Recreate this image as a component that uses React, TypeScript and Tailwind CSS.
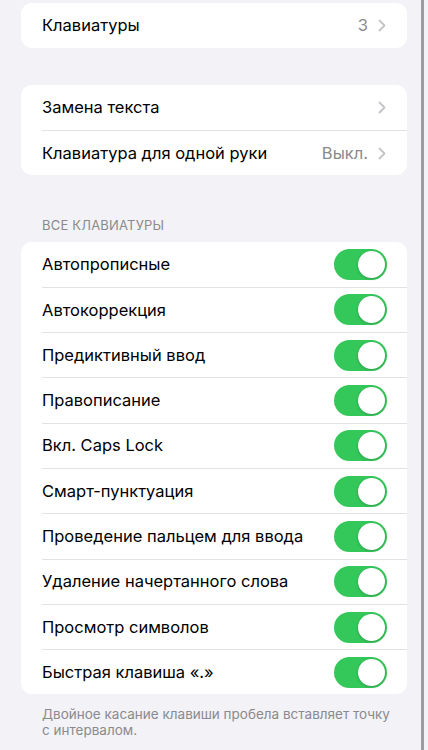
import React from 'react';

const font = { fontFamily: 'Inter, "Noto Sans", sans-serif' };

const Chevron = () => (
    <svg width="8" height="13" viewBox="0 0 8 13" fill="none" className="ml-[10px]">
        <path d="M1.5 1.5L6.5 6.5L1.5 11.5" stroke="#c4c4c8" strokeWidth="1.8" strokeLinecap="round" strokeLinejoin="round" />
    </svg>
);

const Toggle = () => (
    <div className="w-[53px] h-[31px] rounded-full bg-[#34c759] flex items-center justify-end pr-[2px]">
        <div className="w-[27px] h-[27px] rounded-full bg-white shadow-[0_1px_3px_rgba(0,0,0,0.2)]" />
    </div>
);

const LinkRow = ({ label, value, first }: { label: string; value?: string; first?: boolean }) => (
    <div className="flex items-center h-[45px] pl-[21px]">
        <div className={`flex items-center h-full flex-1 pr-[21px] ${first ? '' : 'border-t border-[#e2e2e6]'}`}>
            <span className="flex-1 text-[16.5px] text-black">{label}</span>
            {value && <span className="text-[16.5px] text-[#8a8a8e]">{value}</span>}
            <Chevron />
        </div>
    </div>
);

const ToggleRow = ({ label, first }: { label: string; first?: boolean }) => (
    <div className="flex items-center h-[45.3px] pl-[21px]">
        <div className={`flex items-center h-full flex-1 pr-[20px] ${first ? '' : 'border-t border-[#e2e2e6]'}`}>
            <span className="flex-1 text-[16.5px] text-black">{label}</span>
            <Toggle />
        </div>
    </div>
);

const toggles = [
    'Автопрописные',
    'Автокоррекция',
    'Предиктивный ввод',
    'Правописание',
    'Вкл. Caps Lock',
    'Смарт-пунктуация',
    'Проведение пальцем для ввода',
    'Удаление начертанного слова',
    'Просмотр символов',
    'Быстрая клавиша «.»',
];

const App = () => {
    return (
        <div className="flex w-[428px] h-[750px] overflow-hidden bg-[#f2f2f7]" style={font}>
            <div className="flex-1 pl-[21px] pr-[14px] pt-[3px]">
                <div className="bg-white rounded-[11px] overflow-hidden">
                    <LinkRow label="Клавиатуры" value="3" first />
                </div>

                <div className="bg-white rounded-[11px] overflow-hidden mt-[37px]">
                    <LinkRow label="Замена текста" first />
                    <LinkRow label="Клавиатура для одной руки" value="Выкл." />
                </div>

                <div className="pl-[21px] pt-[41px] pb-[6px] text-[13px] text-[#8a8a8e] uppercase tracking-[0.2px]">
                    Все клавиатуры
                </div>

                <div className="bg-white rounded-[11px] overflow-hidden">
                    {toggles.map((t, i) => (
                        <ToggleRow key={t} label={t} first={i === 0} />
                    ))}
                </div>

                <p className="pl-[21px] pr-[8px] pt-[12px] text-[13.5px] leading-[16px] text-[#8a8a8e]">
                    Двойное касание клавиши пробела вставляет точку с интервалом.
                </p>
            </div>
            <div className="w-[3px] h-full bg-[#9c9ca1]" />
            <div className="w-[4px]" />
        </div>
    );
};

export default App;
